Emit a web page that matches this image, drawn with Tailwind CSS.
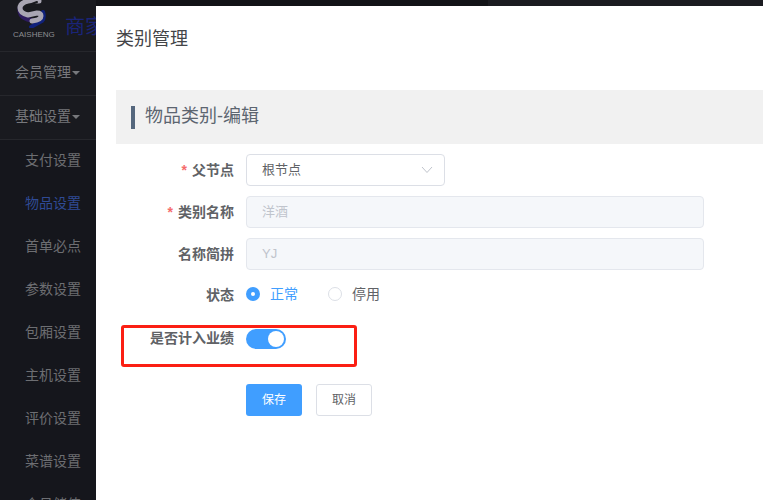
<!DOCTYPE html>
<html lang="zh-CN">
<head>
    <meta charset="UTF-8">
    <title>类别管理</title>
    <script src="https://cdn.jsdelivr.net/npm/@tailwindcss/browser@4"></script>
</head>
<body>
    <div class="relative w-[763px] h-[500px] overflow-hidden bg-[#191a1f] font-['Liberation_Sans','Noto_Sans_CJK_SC',sans-serif]">
        <!-- top strip behind the modal -->
        <div class="absolute left-[96px] top-0 flex h-[6px] w-[667px]">
            <div class="w-[392px] bg-[#121317]"></div>
            <div class="flex-1 bg-[#1a1b20]"></div>
        </div>

        <!-- sidebar -->
        <div class="w-[96px] h-[500px] overflow-hidden bg-[#15161c]">
            <div class="relative h-[52px] border-b border-[#26272c] bg-[#191a1f]">
                <svg class="absolute left-[16px] top-0" width="30" height="28" viewBox="0 0 30 28">
                    <path d="M4 8 Q3 16 11 19 L17 21" fill="none" stroke="#2c1a5e" stroke-width="5" stroke-linecap="round"/>
                    <path d="M27 12 Q29 18 26 21 L15 27" fill="none" stroke="#10217a" stroke-width="4" stroke-linecap="round"/>
                    <path d="M23 1 L12 1 Q4 3 4 8 Q4 13 12 15 L21 13 Q25 13 25 16 Q25 20 16 21" fill="none" stroke="#a9a6b3" stroke-width="5" stroke-linecap="round" stroke-linejoin="round"/>
                    <path d="M21 2 L13 5 Q9 7 11 9 L21 8" fill="none" stroke="#191a1f" stroke-width="2" stroke-linecap="round"/>
                </svg>
                <span class="absolute left-[13px] top-[29px] text-[8px] leading-[12px] text-[#8d8e92]">CAISHENG</span>
                <span class="absolute left-[65px] top-[13px] text-[20px] leading-[28px] whitespace-nowrap text-[#1a2478]">商家</span>
            </div>
            <div class="flex h-[44px] items-center pb-[2px] pl-[15px] border-b border-[#26272c] bg-[#191a1f] text-[14px] text-[#77787c] whitespace-nowrap">会员管理<span class="ml-[1px] border-x-[4px] border-t-[4px] border-x-transparent border-t-[#77787c]"></span></div>
            <div class="flex h-[44px] items-center pb-[2px] pl-[15px] border-b border-[#26272c] bg-[#191a1f] text-[14px] text-[#77787c] whitespace-nowrap">基础设置<span class="ml-[1px] border-x-[4px] border-t-[4px] border-x-transparent border-t-[#77787c]"></span></div>
            <div class="flex flex-col pl-[25px] text-[14px] text-[#6d6e72] whitespace-nowrap">
                <div class="flex h-[43px] items-center pb-[2px]">支付设置</div>
                <div class="flex h-[43px] items-center pb-[2px] text-[#2f4a94]">物品设置</div>
                <div class="flex h-[43px] items-center pb-[2px]">首单必点</div>
                <div class="flex h-[43px] items-center pb-[2px]">参数设置</div>
                <div class="flex h-[43px] items-center pb-[2px]">包厢设置</div>
                <div class="flex h-[43px] items-center pb-[2px]">主机设置</div>
                <div class="flex h-[43px] items-center pb-[2px]">评价设置</div>
                <div class="flex h-[43px] items-center pb-[2px]">菜谱设置</div>
                <div class="flex h-[43px] items-center pb-[2px]">会员储值</div>
            </div>
        </div>

        <!-- modal -->
        <div class="absolute left-[96px] top-[6px] w-[667px] h-[494px] bg-white">
            <h2 class="pl-[20px] pt-[20px] text-[18px] leading-[26px] font-normal text-[#444548]">类别管理</h2>
            <div class="mt-[38px] ml-[20px] flex h-[54px] items-center bg-[#f1f1f1] pl-[15px]">
                <span class="h-[23px] w-[4px] bg-[#55677d]"></span>
                <span class="ml-[10px] -mt-[1px] text-[18px] text-[#5c6570]">物品类别-编辑</span>
            </div>
            <form class="mt-[10px] flex flex-col text-[13px]">
                <div class="flex h-[32px] items-center">
                    <label class="w-[138px] text-right text-[14px] font-bold text-[#606266]"><span class="mr-[5px] text-[#f56c6c]">*</span>父节点</label>
                    <div class="ml-[12px] flex h-[32px] w-[199px] items-center justify-between rounded-[4px] border border-[#dcdfe6] pl-[15px] pr-[11px] text-[#606266]">
                        根节点
                        <svg width="12" height="8" viewBox="0 0 12 8"><path d="M1 1 L6 6.5 L11 1" fill="none" stroke="#c0c4cc" stroke-width="1"/></svg>
                    </div>
                </div>
                <div class="mt-[10px] flex h-[32px] items-center">
                    <label class="w-[138px] text-right text-[14px] font-bold text-[#606266]"><span class="mr-[5px] text-[#f56c6c]">*</span>类别名称</label>
                    <div class="ml-[12px] flex h-[32px] w-[458px] items-center rounded-[4px] border border-[#e4e7ed] bg-[#f5f7fa] pl-[15px] text-[#c0c4cc]">洋酒</div>
                </div>
                <div class="mt-[10px] flex h-[32px] items-center">
                    <label class="w-[138px] text-right text-[14px] font-bold text-[#606266]">名称简拼</label>
                    <div class="ml-[12px] flex h-[32px] w-[458px] items-center rounded-[4px] border border-[#e4e7ed] bg-[#f5f7fa] pl-[15px] text-[#c0c4cc]">YJ</div>
                </div>
                <div class="mt-[10px] flex h-[32px] items-center">
                    <label class="w-[138px] -mt-[2px] text-right text-[14px] font-bold text-[#606266]">状态</label>
                    <div class="ml-[12px] -mt-[4px] flex items-center text-[14px]">
                        <span class="flex h-[14px] w-[14px] items-center justify-center rounded-full bg-[#409eff]"><span class="h-[4px] w-[4px] rounded-full bg-white"></span></span>
                        <span class="ml-[10px] text-[#409eff]">正常</span>
                        <span class="ml-[30px] h-[14px] w-[14px] rounded-full border border-[#dcdfe6]"></span>
                        <span class="ml-[10px] text-[#606266]">停用</span>
                    </div>
                </div>
                <div class="mt-[12px] flex h-[32px] items-center">
                    <label class="w-[138px] -mt-[4px] text-right text-[14px] font-bold text-[#606266]">是否计入业绩</label>
                    <span class="ml-[12px] -mt-[2px] flex h-[20px] w-[40px] items-center justify-end rounded-full bg-[#409eff] pr-[2px]"><span class="h-[16px] w-[16px] rounded-full bg-white"></span></span>
                </div>
                <div class="mt-[28px] ml-[150px] flex gap-[14px]">
                    <button type="button" class="h-[32px] w-[56px] rounded-[3px] bg-[#409eff] text-[12px] text-white">保存</button>
                    <button type="button" class="h-[32px] w-[56px] rounded-[3px] border border-[#dcdfe6] bg-white text-[12px] text-[#606266]">取消</button>
                </div>
            </form>
        </div>

        <!-- red annotation box -->
        <div class="absolute left-[121px] top-[325px] h-[42px] w-[236px] rounded-[3px] border-[3px] border-[#fb1f13]"></div>
    </div>
</body>
</html>
